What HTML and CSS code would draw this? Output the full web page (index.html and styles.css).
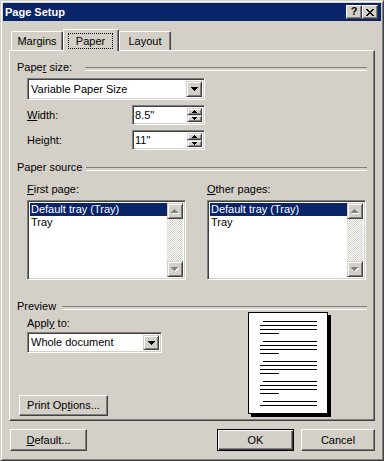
FILE: index.html
```html
<!DOCTYPE html>
<html>
<head>
<meta charset="utf-8">
<link rel="stylesheet" href="styles.css">
</head>
<body>
<div class="window">
  <div class="titlebar">
    <span class="title">Page Setup</span>
    <div class="cap-btns">
      <div class="cap-btn help">?</div>
      <div class="cap-btn">
        <svg width="8" height="7" viewBox="0 0 8 7" shape-rendering="crispEdges"><path d="M0 0h2v1H0zM6 0h2v1H6zM1 1h2v1H1zM5 1h2v1H5zM2 2h4v1H2zM3 3h2v1H3zM2 4h4v1H2zM1 5h2v1H1zM5 5h2v1H5zM0 6h2v1H0zM6 6h2v1H6z" fill="#000"/></svg>
      </div>
    </div>
  </div>
  <div class="client">
    <div class="tabs">
      <div class="tab t-margins">Margins</div>
      <div class="tab active"><span class="focus">Paper</span></div>
      <div class="tab t-layout">Layout</div>
    </div>
    <div class="panel">
      <div class="gtitle gt-size"><span>Pape<u>r</u> size:</span></div>
      <div class="indent">
        <div class="field combo c-paper">
          <span class="combo-text">Variable Paper Size</span>
          <span class="drop"><svg width="7" height="4" viewBox="0 0 7 4" shape-rendering="crispEdges"><path d="M0 0h7v1H0zM1 1h5v1H1zM2 2h3v1H2zM3 3h1v1H3z" fill="#000"/></svg></span>
        </div>
        <div class="frow">
          <span class="lbl"><u>W</u>idth:</span>
          <div class="field spin">
            <span class="spin-text">8.5"</span>
            <span class="spin-btns">
              <span class="sbtn"><svg width="5" height="3" viewBox="0 0 5 3" shape-rendering="crispEdges"><path d="M2 0h1v1H2zM1 1h3v1H1zM0 2h5v1H0z" fill="#000"/></svg></span>
              <span class="sbtn"><svg width="5" height="3" viewBox="0 0 5 3" shape-rendering="crispEdges"><path d="M0 0h5v1H0zM1 1h3v1H1zM2 2h1v1H2z" fill="#000"/></svg></span>
            </span>
          </div>
        </div>
        <div class="frow">
          <span class="lbl">Hei<u>g</u>ht:</span>
          <div class="field spin">
            <span class="spin-text">11"</span>
            <span class="spin-btns">
              <span class="sbtn"><svg width="5" height="3" viewBox="0 0 5 3" shape-rendering="crispEdges"><path d="M2 0h1v1H2zM1 1h3v1H1zM0 2h5v1H0z" fill="#000"/></svg></span>
              <span class="sbtn"><svg width="5" height="3" viewBox="0 0 5 3" shape-rendering="crispEdges"><path d="M0 0h5v1H0zM1 1h3v1H1zM2 2h1v1H2z" fill="#000"/></svg></span>
            </span>
          </div>
        </div>
      </div>

      <div class="gtitle gt-source"><span>Paper source</span></div>
      <div class="indent cols">
        <div class="col">
          <div class="lbl"><u>F</u>irst page:</div>
          <div class="field listbox">
            <div class="items">
              <div class="item sel">Default tray (Tray)</div>
              <div class="item">Tray</div>
            </div>
            <div class="vscroll">
              <span class="sb-btn"><svg width="8" height="5" viewBox="0 0 8 5" shape-rendering="crispEdges"><path d="M4 1h1v1H4zM3 2h3v1H3zM2 3h5v1H2zM1 4h7v1H1z" fill="#fff"/><path d="M3 0h1v1H3zM2 1h3v1H2zM1 2h5v1H1zM0 3h7v1H0z" fill="#808080"/></svg></span>
              <span class="track"></span>
              <span class="sb-btn"><svg width="8" height="5" viewBox="0 0 8 5" shape-rendering="crispEdges"><path d="M1 1h7v1H1zM2 2h5v1H2zM3 3h3v1H3zM4 4h1v1H4z" fill="#fff"/><path d="M0 0h7v1H0zM1 1h5v1H1zM2 2h3v1H2zM3 3h1v1H3z" fill="#808080"/></svg></span>
            </div>
          </div>
        </div>
        <div class="col">
          <div class="lbl"><u>O</u>ther pages:</div>
          <div class="field listbox">
            <div class="items">
              <div class="item sel">Default tray (Tray)</div>
              <div class="item">Tray</div>
            </div>
            <div class="vscroll">
              <span class="sb-btn"><svg width="8" height="5" viewBox="0 0 8 5" shape-rendering="crispEdges"><path d="M4 1h1v1H4zM3 2h3v1H3zM2 3h5v1H2zM1 4h7v1H1z" fill="#fff"/><path d="M3 0h1v1H3zM2 1h3v1H2zM1 2h5v1H1zM0 3h7v1H0z" fill="#808080"/></svg></span>
              <span class="track"></span>
              <span class="sb-btn"><svg width="8" height="5" viewBox="0 0 8 5" shape-rendering="crispEdges"><path d="M1 1h7v1H1zM2 2h5v1H2zM3 3h3v1H3zM4 4h1v1H4z" fill="#fff"/><path d="M0 0h7v1H0zM1 1h5v1H1zM2 2h3v1H2zM3 3h1v1H3z" fill="#808080"/></svg></span>
            </div>
          </div>
        </div>
      </div>

      <div class="gtitle gt-preview"><span>Preview</span></div>
      <div class="pv-row">
        <div class="pv-left">
          <div class="pv-opts">
            <div class="lbl">Appl<u>y</u> to:</div>
            <div class="field combo c-apply">
              <span class="combo-text">Whole document</span>
              <span class="drop"><svg width="7" height="4" viewBox="0 0 7 4" shape-rendering="crispEdges"><path d="M0 0h7v1H0zM1 1h5v1H1zM2 2h3v1H2zM3 3h1v1H3z" fill="#000"/></svg></span>
            </div>
          </div>
          <div class="btn btn-print">Print Op<u>t</u>ions...</div>
        </div>
        <svg class="page" width="84" height="106" viewBox="0 0 84 106" shape-rendering="crispEdges">
          <rect x="3" y="3" width="80" height="102" fill="#000"/>
          <rect x="0.5" y="0.5" width="79" height="101" fill="#fff" stroke="#000"/>
          <g stroke="#000" stroke-width="1">
            <path d="M15 9.5H69M12 13.5H69M12 17.5H69M12 21.5H31"/>
            <path d="M15 29.5H69M12 33.5H69M12 37.5H69M12 41.5H31"/>
            <path d="M15 49.5H69M12 53.5H69M12 57.5H69M12 61.5H31"/>
            <path d="M15 69.5H69M12 73.5H69M12 77.5H69M12 81.5H31"/>
            <path d="M15 89.5H69M12 93.5H69"/>
          </g>
        </svg>
      </div>
    </div>
    <div class="actions">
      <div class="btn btn-def"><u>D</u>efault...</div>
      <div class="spacer"></div>
      <div class="btn btn-ok">OK</div>
      <div class="btn btn-cancel">Cancel</div>
    </div>
  </div>
</div>
</body>
</html>
```
FILE: styles.css
```css
* { box-sizing: border-box; }
html, body { margin: 0; padding: 0; }
body {
  width: 384px;
  height: 461px;
  overflow: hidden;
  background: #d4d0c8;
  color: #000;
  font: 11px/13px "Liberation Sans", Arial, sans-serif;
}
u { text-decoration: underline; text-underline-offset: 1px; }

.window {
  width: 384px;
  height: 461px;
  background: #d4d0c8;
  border: 1px solid;
  border-color: #d4d0c8 #404040 #404040 #d4d0c8;
  box-shadow: inset 1px 1px #fff, inset -1px -1px #808080;
  padding: 2px;
  display: flex;
  flex-direction: column;
}

.titlebar {
  height: 18px;
  background: #0a246a;
  display: flex;
  align-items: center;
  padding: 0 3px 0 2px;
}
.title {
  flex: 1;
  color: #fff;
  font-weight: bold;
  font-size: 11px;
}
.cap-btns { display: flex; }
.cap-btn {
  width: 16px;
  height: 14px;
  background: #d4d0c8;
  border: 1px solid;
  border-color: #fff #404040 #404040 #fff;
  box-shadow: inset -1px -1px #808080;
  display: flex;
  align-items: center;
  justify-content: center;
}
.cap-btn.help {
  font-weight: bold;
  font-size: 11px;
  line-height: 11px;
  padding-bottom: 1px;
}

.client {
  flex: 1;
  padding: 8px 6px 0 6px;
}

.tabs {
  display: flex;
  align-items: flex-end;
  height: 21px;
  padding-left: 2px;
}
.tab {
  height: 19px;
  background: #d4d0c8;
  border-top: 1px solid #fff;
  border-left: 1px solid #fff;
  border-right: 1px solid #404040;
  box-shadow: inset -1px 0 #808080;
  border-radius: 2px 2px 0 0;
  text-align: center;
  padding-top: 3px;
}
.t-margins { width: 52px; }
.t-layout { width: 52px; }
.tab.active {
  width: 56px;
  height: 22px;
  margin-bottom: -1px;
  position: relative;
  z-index: 1;
  padding: 3px 5px 2px 4px;
  display: flex;
}
.focus {
  flex: 1;
  border: 1px dotted #000;
  display: flex;
  align-items: center;
  justify-content: center;
}

.panel {
  width: 366px;
  height: 371px;
  border: 1px solid;
  border-color: #fff #404040 #404040 #fff;
  box-shadow: inset -1px -1px #808080;
  padding: 10px 7px 0 7px;
}

.gtitle {
  display: flex;
  height: 13px;
}
.gtitle span { white-space: nowrap; }
.gtitle::after {
  content: "";
  flex: 1;
  height: 2px;
  margin-top: 6px;
  border-top: 1px solid #808080;
  border-bottom: 1px solid #fff;
}
.gt-size span { width: 68px; }
.gt-source { margin-top: 11px; }
.gt-source span { width: 69px; }
.gt-preview { margin-top: 20px; }
.gt-preview span { width: 45px; }

.indent { padding-left: 10px; }

.field {
  background: #fff;
  border: 1px solid;
  border-color: #808080 #fff #fff #808080;
  box-shadow: inset 1px 1px #404040, inset -1px -1px #d4d0c8;
  padding: 2px;
}

.combo {
  display: flex;
  align-items: stretch;
}
.c-paper { width: 178px; height: 22px; margin-top: 4px; }
.c-apply { width: 135px; height: 21px; margin-top: 2px; }
.combo-text {
  flex: 1;
  padding-left: 1px;
  display: flex;
  align-items: center;
  white-space: nowrap;
}
.drop {
  width: 16px;
  background: #d4d0c8;
  border: 1px solid;
  border-color: #d4d0c8 #404040 #404040 #d4d0c8;
  box-shadow: inset 1px 1px #fff, inset -1px -1px #808080;
  display: flex;
  align-items: center;
  justify-content: center;
}

.frow {
  width: 178px;
  display: flex;
  justify-content: space-between;
  align-items: center;
  margin-top: 5px;
}
.spin {
  width: 73px;
  height: 20px;
  display: flex;
  padding: 2px 2px 2px 2px;
}
.spin-text {
  flex: 1;
  display: flex;
  align-items: center;
}
.spin-btns {
  width: 15px;
  display: flex;
  flex-direction: column;
}
.sbtn {
  flex: 1;
  background: #d4d0c8;
  border: 1px solid;
  border-color: #d4d0c8 #404040 #404040 #d4d0c8;
  box-shadow: inset 1px 1px #fff, inset -1px -1px #808080;
  display: flex;
  align-items: center;
  justify-content: center;
}

.cols {
  display: grid;
  grid-template-columns: 159px 159px;
  column-gap: 21px;
  margin-top: 9px;
}
.listbox {
  width: 159px;
  height: 80px;
  margin-top: 4px;
  display: flex;
}
.items { flex: 1; }
.item {
  height: 13px;
  line-height: 13px;
  padding-left: 1px;
  white-space: nowrap;
}
.item.sel {
  background: #0a246a;
  color: #fff;
}
.vscroll {
  width: 16px;
  display: flex;
  flex-direction: column;
}
.sb-btn {
  height: 16px;
  background: #d4d0c8;
  border: 1px solid;
  border-color: #d4d0c8 #404040 #404040 #d4d0c8;
  box-shadow: inset 1px 1px #fff, inset -1px -1px #808080;
  display: flex;
  align-items: center;
  justify-content: center;
}
.track {
  flex: 1;
  background: repeating-conic-gradient(#fff 0 25%, #d4d0c8 0 50%) 0 0 / 2px 2px;
}

.pv-row {
  display: flex;
  margin-top: -1px;
}
.pv-left {
  width: 231px;
  display: flex;
  flex-direction: column;
}
.pv-opts {
  padding-left: 10px;
  padding-top: 5px;
}
.page { display: block; }

.btn {
  height: 21px;
  background: #d4d0c8;
  border: 1px solid;
  border-color: #fff #404040 #404040 #fff;
  box-shadow: inset -1px -1px #808080;
  display: flex;
  align-items: center;
  justify-content: center;
  white-space: nowrap;
}
.btn-print {
  width: 89px;
  margin-top: auto;
  margin-left: 2px;
  margin-bottom: 2px;
}

.actions {
  display: flex;
  margin-top: 8px;
  padding-left: 1px;
}
.spacer { flex: 1; }
.btn-def { width: 77px; height: 22px; }
.btn-ok {
  width: 77px;
  height: 22px;
  margin-right: 7px;
  border-color: #000;
  box-shadow: inset 1px 1px #fff, inset -1px -1px #404040, inset -2px -2px #808080;
}
.btn-cancel { width: 74px; height: 22px; }
```
